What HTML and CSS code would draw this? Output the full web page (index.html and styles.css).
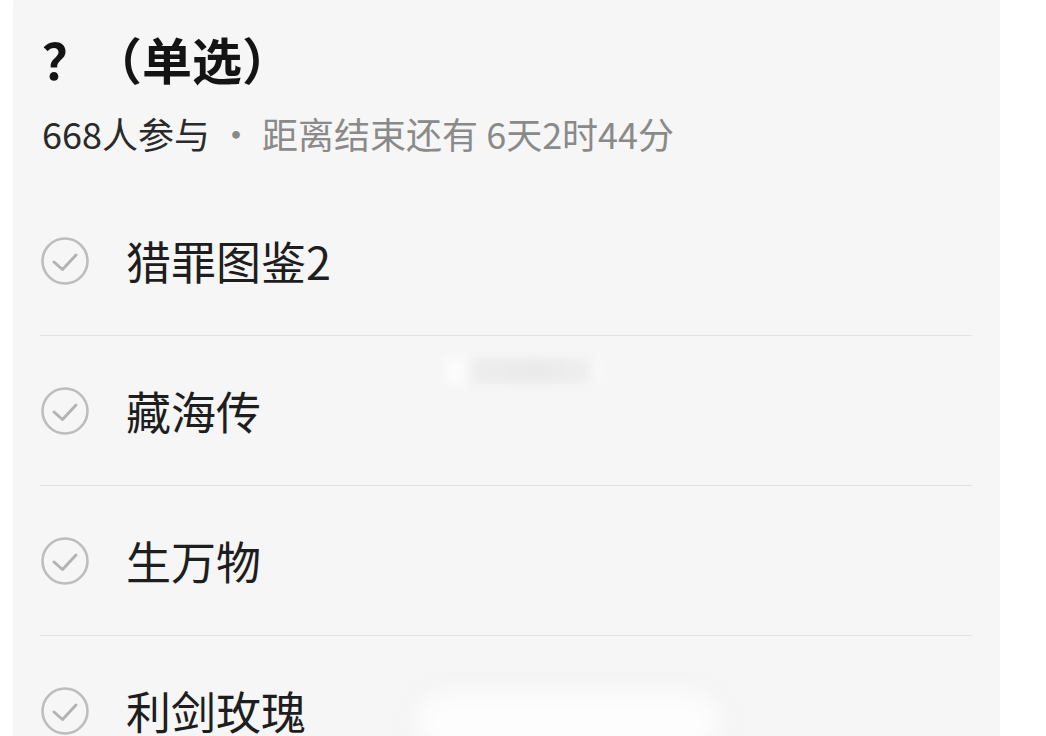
FILE: index.html
```html
<!DOCTYPE html>
<html lang="zh">
<head>
<meta charset="utf-8">
<link rel="stylesheet" href="styles.css">
</head>
<body>
<div class="card">
  <h1 class="title">？（单选）</h1>
  <p class="meta"><span class="count">668人参与</span><span class="rest"> · 距离结束还有 6天2时44分</span></p>
  <ul class="options">
    <li class="option"><svg class="check" viewBox="0 0 50 50"><circle cx="25" cy="25" r="22.5"/><path d="M14 26 L22.5 33.5 L36 19"/></svg><span class="label">猎罪图鉴2</span></li>
    <li class="option"><svg class="check" viewBox="0 0 50 50"><circle cx="25" cy="25" r="22.5"/><path d="M14 26 L22.5 33.5 L36 19"/></svg><span class="label">藏海传</span></li>
    <li class="option"><svg class="check" viewBox="0 0 50 50"><circle cx="25" cy="25" r="22.5"/><path d="M14 26 L22.5 33.5 L36 19"/></svg><span class="label">生万物</span></li>
    <li class="option"><svg class="check" viewBox="0 0 50 50"><circle cx="25" cy="25" r="22.5"/><path d="M14 26 L22.5 33.5 L36 19"/></svg><span class="label">利剑玫瑰</span></li>
  </ul>
  <div class="smudge smudge-a"></div>
  <div class="smudge smudge-b"></div>
</div>
</body>
</html>
```

FILE: styles.css
```css
html, body {
  margin: 0;
  padding: 0;
  background: #ffffff;
  overflow: hidden;
}
body {
  width: 1046px;
  height: 736px;
  font-family: "Noto Sans CJK SC", "Noto Sans", sans-serif;
}
.card {
  position: relative;
  margin: -20px 0 0 13px;
  width: 987px;
  height: 756px;
  background: #f6f6f6;
  border-radius: 26px 26px 0 0;
  padding: 0 28px 0 27px;
  box-sizing: border-box;
  overflow: hidden;
}
.title {
  margin: 0;
  padding: 46px 0 0 2px;
  font-size: 50px;
  font-weight: 700;
  line-height: 64px;
  color: #141414;
}
.meta {
  margin: 0;
  padding: 18px 0 0 2px;
  font-size: 36px;
  line-height: 50px;
  color: #8a8a8a;
}
.count {
  color: #2a2a2a;
}
.options {
  list-style: none;
  margin: 28px 0 0;
  padding: 0;
}
.option {
  display: flex;
  align-items: center;
  height: 150px;
  box-sizing: border-box;
  border-bottom: 1px solid #e2e2e2;
}
.check {
  width: 50px;
  height: 50px;
  flex: none;
}
.check circle {
  fill: none;
  stroke: #bdbdbd;
  stroke-width: 2.6;
}
.check path {
  fill: none;
  stroke: #b3b3b3;
  stroke-width: 3;
  stroke-linecap: round;
  stroke-linejoin: round;
}
.label {
  margin-left: 36px;
  font-size: 45px;
  color: #1e1e1e;
  line-height: 60px;
}
.smudge {
  position: absolute;
  filter: blur(4px);
}
.smudge-a {
  left: 433px;
  top: 378px;
  width: 155px;
  height: 26px;
  background: linear-gradient(90deg, #ffffff 0 10%, #e9e9e9 20%, #e6e6e6 60%, #ececec 90%, #ffffff 100%);
  opacity: 0.7;
}
.smudge-b {
  left: 390px;
  top: 702px;
  width: 330px;
  height: 80px;
  border-radius: 40px;
  background: #fdfdfd;
  box-shadow: inset 0 0 30px #ececec;
  filter: blur(6px);
}
```
